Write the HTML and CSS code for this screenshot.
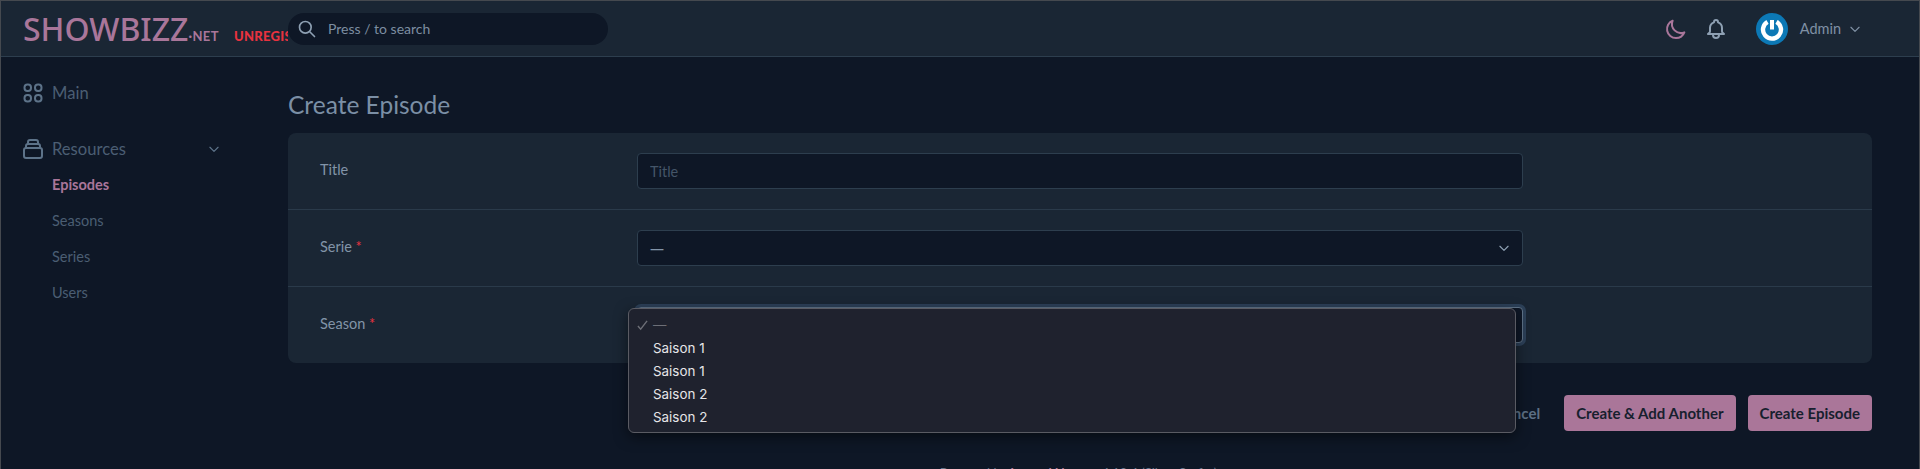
FILE: index.html
```html
<!DOCTYPE html>
<html lang="en">
<head>
    <meta charset="UTF-8">
    <title>Create Episode</title>
    <link rel="stylesheet" href="styles.css">
</head>
<body>
    <header class="topbar">
        <div class="brand">
            <span class="logo">SHOWBIZZ</span><span class="logo-net">·NET</span>
            <span class="unregistered">UNREGISTERED</span>
        </div>
        <div class="search">
            <svg class="icon search-icon" viewBox="0 0 24 24"><path d="M21 21l-6-6m2-5a7 7 0 11-14 0 7 7 0 0114 0z"/></svg>
            <span>Press / to search</span>
        </div>
        <div class="top-actions">
            <svg class="icon moon" viewBox="0 0 24 24"><path d="M20.354 15.354A9 9 0 018.646 3.646 9.003 9.003 0 0012 21a9.003 9.003 0 008.354-5.646z"/></svg>
            <svg class="icon bell" viewBox="0 0 24 24"><path d="M15 17h5l-1.405-1.405A2.032 2.032 0 0118 14.158V11a6.002 6.002 0 00-4-5.659V5a2 2 0 10-4 0v.341C7.67 6.165 6 8.388 6 11v3.159c0 .538-.214 1.055-.595 1.436L4 17h5m6 0v1a3 3 0 11-6 0v-1m6 0H9"/></svg>
            <svg class="avatar" viewBox="0 0 32 32">
                <circle cx="16" cy="16" r="16" fill="#0c78b5"/>
                <path d="M11.5 8.8a9 9 0 1 0 9 0" fill="none" stroke="#fff" stroke-width="4.4"/>
                <path d="M16 7v9.5" fill="none" stroke="#fff" stroke-width="4"/>
            </svg>
            <span class="user-name">Admin</span>
            <svg class="icon user-chevron" viewBox="0 0 24 24"><path d="M19 9l-7 7-7-7"/></svg>
        </div>
    </header>

    <div class="layout">
        <nav class="sidebar">
            <div class="nav-head">
                <svg class="icon nav-icon" viewBox="0 0 24 24"><rect x="3.5" y="3.5" width="6.5" height="6.5" rx="3"/><rect x="14" y="3.5" width="6.5" height="6.5" rx="3"/><rect x="3.5" y="14" width="6.5" height="6.5" rx="3"/><rect x="14" y="14" width="6.5" height="6.5" rx="3"/></svg>
                <span>Main</span>
            </div>
            <div class="nav-head nav-resources">
                <svg class="icon nav-icon" viewBox="0 0 24 24"><path d="M19 11H5m14 0a2 2 0 012 2v6a2 2 0 01-2 2H5a2 2 0 01-2-2v-6a2 2 0 012-2m14 0V9a2 2 0 00-2-2M5 11V9a2 2 0 012-2m0 0V5a2 2 0 012-2h6a2 2 0 012 2v2M7 7h10"/></svg>
                <span>Resources</span>
                <svg class="icon nav-chevron" viewBox="0 0 24 24"><path d="M19 9l-7 7-7-7"/></svg>
            </div>
            <ul class="nav-list">
                <li class="active">Episodes</li>
                <li>Seasons</li>
                <li>Series</li>
                <li>Users</li>
            </ul>
        </nav>

        <main class="content">
            <h1>Create Episode</h1>
            <form class="card">
                <div class="row">
                    <label class="row-label">Title</label>
                    <input class="control" type="text" placeholder="Title">
                </div>
                <div class="row">
                    <label class="row-label">Serie <b>*</b></label>
                    <div class="control select">
                        <span class="dash">—</span>
                        <svg class="icon select-chevron" viewBox="0 0 24 24"><path d="M19 9l-7 7-7-7"/></svg>
                    </div>
                </div>
                <div class="row">
                    <label class="row-label">Season <b>*</b></label>
                    <div class="control select focused">
                        <ul class="menu">
                            <li class="picked">
                                <svg class="check" viewBox="0 0 12 12"><path d="M1 6.5l3 3.5 7-9"/></svg>
                                —
                            </li>
                            <li>Saison 1</li>
                            <li>Saison 1</li>
                            <li>Saison 2</li>
                            <li>Saison 2</li>
                        </ul>
                    </div>
                </div>
            </form>
            <div class="actions">
                <a class="cancel">Cancel</a>
                <button type="button">Create &amp; Add Another</button>
                <button type="button">Create Episode</button>
            </div>
            <footer class="foot">Powered by <b>Laravel Nova</b> · v4.19.4 (Silver Surfer).</footer>
        </main>
    </div>
</body>
</html>
```

FILE: styles.css
```css
/* page frame */
html, body {
    height: 469px;
    overflow: hidden;
}

body {
    margin: 0;
    box-sizing: border-box;
    border: 1px solid #45494f;
    border-bottom: none;
    background: #0e1726;
    font-family: "Lato", "Open Sans", sans-serif;
    font-size: 14.5px;
    color: #8294a8;
}

.icon {
    fill: none;
    stroke: currentColor;
    stroke-width: 2;
    stroke-linecap: round;
    stroke-linejoin: round;
    flex: none;
}

/* top bar */
.topbar {
    display: flex;
    align-items: center;
    height: 56px;
    box-sizing: border-box;
    background: #1a2634;
    border-bottom: 1px solid #2d3e4e;
}

.brand {
    display: flex;
    align-items: baseline;
    width: 287px;
    flex: none;
    padding-left: 22px;
    box-sizing: border-box;
    overflow: hidden;
    white-space: nowrap;
}

.logo {
    font-size: 32px;
    font-weight: 500;
    line-height: 40px;
    letter-spacing: 0;
    color: #a9769a;
    font-family: "Noto Sans", sans-serif;
}

.logo-net {
    font-size: 13px;
    font-weight: 700;
    letter-spacing: 0.4px;
    color: #a9769a;
}

.unregistered {
    font-size: 13px;
    font-weight: 900;
    letter-spacing: 0.3px;
    color: #e8323f;
    margin-left: 15px;
}

.search {
    display: flex;
    align-items: center;
    width: 320px;
    height: 32px;
    border-radius: 16px;
    background: #0e1726;
    color: #7d8ea1;
    font-size: 14px;
}

.search-icon {
    width: 20px;
    height: 20px;
    margin: 0 11px 0 9px;
    color: #8ea0b3;
}

.top-actions {
    display: flex;
    align-items: center;
    margin-left: auto;
    padding-right: 57px;
}

.moon {
    width: 24px;
    height: 24px;
    color: #a9769a;
}

.bell {
    width: 24px;
    height: 24px;
    margin-left: 16px;
    color: #8ea0b3;
}

.avatar {
    width: 32px;
    height: 32px;
    margin-left: 28px;
}

.user-name {
    margin-left: 12px;
    color: #7f90a4;
}

.user-chevron {
    width: 14px;
    height: 14px;
    margin-left: 7px;
    color: #7f90a4;
}

/* sidebar + content */
.layout {
    display: flex;
}

.sidebar {
    width: 287px;
    flex: none;
    box-sizing: border-box;
    padding: 24px 0 0 22px;
    color: #4b5e73;
}

.nav-head {
    display: flex;
    align-items: center;
    height: 24px;
    font-size: 16.6px;
}

.nav-resources {
    margin-top: 32px;
    width: 198px;
}

.nav-icon {
    width: 24px;
    height: 24px;
    margin: 0 7px 0 -2px;
    color: #5d7389;
}

.nav-chevron {
    width: 14px;
    height: 14px;
    margin-left: auto;
    color: #5d7389;
}

.nav-list {
    list-style: none;
    margin: 6px 0 0;
    padding: 0 0 0 29px;
}

.nav-list li {
    height: 36px;
    line-height: 36px;
}

.nav-list .active {
    font-weight: 700;
    color: #a9769a;
}

.content {
    flex: 1;
    min-width: 0;
    padding: 32px 47px 0 0;
}

h1 {
    margin: 0 0 12px;
    font-size: 24.5px;
    font-weight: 400;
    line-height: 32px;
    color: #7b8fa5;
}

.card {
    background: #1a2634;
    border-radius: 8px;
}

.row {
    display: flex;
    align-items: flex-start;
    padding: 20px 0;
    height: 76px;
    box-sizing: border-box;
}

.row + .row {
    box-sizing: content-box;
    height: 36px;
    border-top: 1px solid #2a3a4a;
}

.row-label {
    width: 349px;
    flex: none;
    box-sizing: border-box;
    padding: 5px 0 0 32px;
    line-height: 24px;
    color: #8294a8;
}

.row-label b {
    color: #e8323f;
    font-weight: 400;
}

.control {
    width: 886px;
    height: 36px;
    box-sizing: border-box;
    padding: 0 12px;
    border: 1px solid #2d3e4e;
    border-radius: 4px;
    background: #0e1726;
    color: #8294a8;
    font: inherit;
    outline: none;
}

.control::placeholder {
    color: #445568;
}

.select {
    position: relative;
    display: flex;
    align-items: center;
    justify-content: space-between;
}

.dash {
    font-family: "Noto Sans", sans-serif;
    font-size: 14px;
}

.select-chevron {
    width: 14px;
    height: 14px;
    margin-right: -1px;
    color: #8ea0b3;
}

.focused {
    border-color: #5f7388;
    box-shadow: 0 0 0 3px #2c4058;
}

/* open native-looking option list */
.menu {
    position: absolute;
    top: 0;
    left: -10px;
    width: 888px;
    height: 125px;
    box-sizing: border-box;
    margin: 0;
    padding: 5px 0 0 24px;
    list-style: none;
    background: #1f222e;
    border: 1px solid #5a5b63;
    border-radius: 6px;
    box-shadow: 0 4px 14px rgba(0, 0, 0, 0.5);
    font-family: "Inter", sans-serif;
    font-size: 13.4px;
    color: #e6e6e8;
    z-index: 5;
}

.menu li {
    position: relative;
    height: 23px;
    line-height: 23px;
}

.menu .picked {
    color: #6d6f77;
}

.check {
    position: absolute;
    left: -16px;
    top: 6px;
    width: 11px;
    height: 11px;
    fill: none;
    stroke: #6d6f77;
    stroke-width: 1.5;
}

/* buttons */
.actions {
    display: flex;
    align-items: center;
    justify-content: flex-end;
    gap: 12px;
    margin-top: 32px;
    font-size: 15px;
}

.cancel {
    margin-right: 12px;
    font-weight: 700;
    color: #5d7085;
}

button {
    height: 36px;
    padding: 0 12px;
    border: none;
    border-radius: 4px;
    background: #aa7699;
    color: #17202e;
    font: inherit;
    font-weight: 700;
    white-space: nowrap;
}

.foot {
    margin-top: 34px;
    line-height: 16px;
    font-size: 13px;
    text-align: center;
    color: #64748b;
}

.foot b {
    color: #a9769a;
}
```
